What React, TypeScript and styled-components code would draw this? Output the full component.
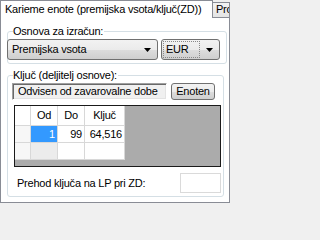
import React from 'react';
import styled, { createGlobalStyle } from 'styled-components';

const cssVarsLocal = {
  font: '"Liberation Sans", Arial, sans-serif',
  tabBorder: '#898c95',
  groupBorder: '#d5dfe5',
  gridLine: '#d8d8d8',
  window: '#f0f0f0'
};

const GlobalStyle = createGlobalStyle`
  html, body {
    margin: 0;
    padding: 0;
    background: ${cssVarsLocal.window};
  }
`;

/**
 * Outer window area.
 */
const Window = styled.div`
  width: 230px;
  height: 208px;
  overflow: hidden;
  background: ${cssVarsLocal.window};
  font-family: ${cssVarsLocal.font};
  font-size: 11px;
  letter-spacing: -0.22px;
  line-height: 13px;
  color: #000;
`;

const TabStrip = styled.div`
  display: flex;
  align-items: flex-start;
  height: 17px;
`;

const Tab = styled.div<{ $active?: boolean }>`
  box-sizing: border-box;
  position: relative;
  white-space: nowrap;
  overflow: hidden;
  border: 1px solid ${cssVarsLocal.tabBorder};
  border-bottom: none;
  ${({ $active }) =>
    $active
      ? `
    z-index: 1;
    width: 213px;
    height: 18px;
    padding: 2px 0 0 4px;
    background: #fff;
  `
      : `
    flex: 1;
    height: 15px;
    margin-top: 2px;
    padding: 0 0 0 3px;
    border-left: none;
    background: linear-gradient(#f3f3f3, #e4e4e4);
  `}
`;

const Panel = styled.div`
  box-sizing: border-box;
  height: 186px;
  border: 1px solid ${cssVarsLocal.tabBorder};
  background: #fff;
  padding: 7px 0 0 6px;
`;

const GroupBox = styled.fieldset<{ $width: number }>`
  box-sizing: border-box;
  width: ${({ $width }) => $width}px;
  margin: 0;
  padding: 1px 0 0 0;
  border: 1px solid ${cssVarsLocal.groupBorder};
  border-radius: 3px;
  min-width: 0;

  & + & {
    margin-top: 5px;
  }
`;

const Caption = styled.legend`
  margin-left: 5px;
  padding: 0 1px 0 0;
  line-height: 13px;
  height: 13px;
`;

const ComboRow = styled.div`
  display: flex;
  gap: 3px;
  margin-left: -1px;
  padding-bottom: 3px;
`;

const Combo = styled.div<{ $width: number }>`
  box-sizing: border-box;
  position: relative;
  display: flex;
  align-items: center;
  width: ${({ $width }) => $width}px;
  height: 21px;
  padding: 0 0 0 4px;
  border: 1px solid #707070;
  border-radius: 3px;
  background: linear-gradient(#f2f2f2 0%, #ebebeb 50%, #dddddd 51%, #cfcfcf 100%);
`;

const ComboText = styled.span<{ $focused?: boolean }>`
  flex: 1;
  height: 15px;
  line-height: 15px;
  margin-left: -2px;
  padding-left: 2px;
  outline: ${({ $focused }) => ($focused ? '1px dotted #888' : 'none')};
  margin-right: 20px;
`;

const Arrow = styled.svg`
  position: absolute;
  right: 6px;
  top: 8px;
`;

const KeyBody = styled.div`
  display: flex;
  flex-direction: column;
  padding: 0 0 3px 4px;
`;

const KeyRow = styled.div`
  display: flex;
  gap: 4px;
`;

const ReadOnlyBox = styled.div`
  box-sizing: border-box;
  width: 155px;
  height: 17px;
  padding: 1px 0 0 5px;
  white-space: nowrap;
  overflow: hidden;
  background: #f0f0f0;
  border-top: 1px solid #a0a0a0;
  border-left: 1px solid #a0a0a0;
  border-right: 1px solid #fff;
  border-bottom: 1px solid #fff;
  box-shadow: inset 1px 1px 0 #696969, inset -1px -1px 0 #e3e3e3;
`;

const Button = styled.div`
  box-sizing: border-box;
  width: 44px;
  height: 17px;
  display: flex;
  align-items: center;
  justify-content: center;
  border: 1px solid #707070;
  border-radius: 3px;
  background: linear-gradient(#f2f2f2 0%, #ebebeb 50%, #dddddd 51%, #cfcfcf 100%);
`;

const GridFrame = styled.div`
  box-sizing: border-box;
  width: 207px;
  height: 62px;
  margin: 5px 0 0 2px;
  border: 1px solid #1a1a1a;
  background: #ababab;
  display: grid;
  grid-template-columns: 16px 27px 27px 40px;
  grid-template-rows: 20px 17px 17px;
  align-content: start;
  justify-content: start;
`;

const Cell = styled.div<{ $kind?: 'head' | 'row' | 'selected' | 'new' | 'data' }>`
  box-sizing: border-box;
  display: flex;
  align-items: center;
  padding: 0 2px;
  border-right: 1px solid ${cssVarsLocal.gridLine};
  border-bottom: 1px solid ${cssVarsLocal.gridLine};
  justify-content: ${({ $kind }) => ($kind === 'head' ? 'center' : 'flex-end')};
  background: ${({ $kind }) =>
    $kind === 'selected' ? '#3399ff' : $kind === 'new' ? '#ececec' : $kind === 'row' ? '#f7f7f7' : '#fff'};
  color: ${({ $kind }) => ($kind === 'selected' ? '#fff' : '#000')};
`;

const BottomRow = styled.div`
  display: flex;
  align-items: center;
  justify-content: space-between;
  width: 209px;
  margin-top: 6px;
  padding-left: 5px;
  box-sizing: border-box;
`;

const Input = styled.div`
  box-sizing: border-box;
  width: 41px;
  height: 20px;
  background: #fff;
  border: 1px solid #dadada;
`;

const DropArrow = () => (
  <Arrow width="7" height="4" viewBox="0 0 7 4">
    <path d="M0 0H7L3.5 4Z" fill="#000" />
  </Arrow>
);

export default function App() {
  return (
    <Window>
      <GlobalStyle />
      <TabStrip>
        <Tab $active>Karieme enote (premijska vsota/ključ(ZD))</Tab>
        <Tab>Pro</Tab>
      </TabStrip>
      <Panel>
        <GroupBox $width={220}>
          <Caption>Osnova za izračun:</Caption>
          <ComboRow>
            <Combo $width={151}>
              <ComboText>Premijska vsota</ComboText>
              <DropArrow />
            </Combo>
            <Combo $width={59}>
              <ComboText $focused>EUR</ComboText>
              <DropArrow />
            </Combo>
          </ComboRow>
        </GroupBox>
        <GroupBox $width={217}>
          <Caption>Ključ (deljitelj osnove):</Caption>
          <KeyBody>
            <KeyRow>
              <ReadOnlyBox>Odvisen od zavarovalne dobe</ReadOnlyBox>
              <Button>Enoten</Button>
            </KeyRow>
            <GridFrame>
              <Cell $kind="head" />
              <Cell $kind="head">Od</Cell>
              <Cell $kind="head">Do</Cell>
              <Cell $kind="head">Ključ</Cell>
              <Cell $kind="row" />
              <Cell $kind="selected">1</Cell>
              <Cell $kind="data">99</Cell>
              <Cell $kind="data">64,516</Cell>
              <Cell $kind="row" />
              <Cell $kind="new" />
              <Cell $kind="data" />
              <Cell $kind="data" />
            </GridFrame>
            <BottomRow>
              <span>Prehod ključa na LP pri ZD:</span>
              <Input />
            </BottomRow>
          </KeyBody>
        </GroupBox>
      </Panel>
    </Window>
  );
}
